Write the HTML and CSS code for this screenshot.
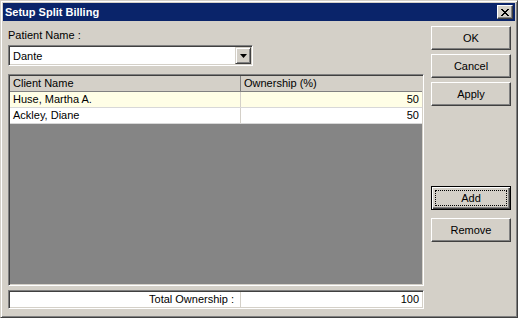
FILE: index.html
```html
<!DOCTYPE html>
<html lang="en">
<head>
    <meta charset="UTF-8">
    <title>Setup Split Billing</title>
    <link rel="stylesheet" href="styles.css">
</head>
<body>
    <div class="window">
        <div class="titlebar">
            <span class="title">Setup Split Billing</span>
            <button class="close-btn">
                <svg width="8" height="7" viewBox="0 0 8 7">
                    <path d="M0 0h2v1h1v1h2v-1h1v-1h2v1h-1v1h-1v1h-1v1h1v1h1v1h1v1h-2v-1h-1v-1h-2v1h-1v1h-2v-1h1v-1h1v-1h1v-1h-1v-1h-1v-1h-1z" fill="#000"/>
                </svg>
            </button>
        </div>

        <div class="dialog-body">
            <div class="main-pane">
                <div class="field-label">Patient Name :</div>
                <div class="combo">
                    <span class="combo-value">Dante</span>
                    <span class="combo-arrow">
                        <svg width="7" height="4" viewBox="0 0 7 4"><path d="M0 0h7l-3.5 4z" fill="#000"/></svg>
                    </span>
                </div>

                <div class="grid">
                    <div class="grid-row grid-head">
                        <div class="cell col-name">Client Name</div>
                        <div class="cell col-pct">Ownership (%)</div>
                    </div>
                    <div class="grid-row row-current">
                        <div class="cell col-name">Huse, Martha A.</div>
                        <div class="cell col-pct num">50</div>
                    </div>
                    <div class="grid-row">
                        <div class="cell col-name">Ackley, Diane</div>
                        <div class="cell col-pct num">50</div>
                    </div>
                </div>

                <div class="total-row">
                    <div class="cell col-name total-label">Total Ownership :</div>
                    <div class="cell col-pct num">100</div>
                </div>
            </div>

            <div class="button-pane">
                <button class="btn">OK</button>
                <button class="btn">Cancel</button>
                <button class="btn">Apply</button>
                <button class="btn btn-focus btn-add"><span class="focus-ring">Add</span></button>
                <button class="btn btn-remove">Remove</button>
            </div>
        </div>
    </div>
</body>
</html>
```

FILE: styles.css
```css
body {
    margin: 0;
    background: #d4d0c8;
    font-family: "Liberation Sans", Arial, sans-serif;
    font-size: 11px;
    color: #000;
}

.window {
    width: 518px;
    height: 318px;
    box-sizing: border-box;
    border: 1px solid;
    border-color: #d4d0c8 #404040 #404040 #d4d0c8;
    box-shadow: inset 1px 1px #fff, inset -1px -1px #808080;
    padding: 2px;
    background: #d4d0c8;
}

.titlebar {
    height: 18px;
    background: #0a246a;
    color: #fff;
    display: flex;
    align-items: center;
    justify-content: space-between;
    padding-left: 2px;
}

.title {
    font-weight: bold;
    font-size: 11px;
}

.close-btn {
    width: 16px;
    height: 14px;
    margin-right: 2px;
    padding: 0;
    box-sizing: border-box;
    background: #d4d0c8;
    border: 1px solid;
    border-color: #fff #404040 #404040 #fff;
    box-shadow: inset -1px -1px #808080;
    display: flex;
    align-items: center;
    justify-content: center;
}

.dialog-body {
    display: flex;
    gap: 7px;
    padding: 0 2px 0 5px;
}

.main-pane {
    width: 416px;
    padding-top: 8px;
}

.field-label {
    line-height: 13px;
    height: 13px;
}

.combo {
    margin-top: 3px;
    width: 245px;
    height: 21px;
    box-sizing: border-box;
    border: 1px solid;
    border-color: #808080 #fff #fff #808080;
    box-shadow: inset 1px 1px #404040, inset -1px -1px #d4d0c8;
    padding: 1px;
    background: #fff;
    display: flex;
    align-items: center;
}

.combo-value {
    flex: 1;
    padding-left: 3px;
}

.combo-arrow {
    width: 16px;
    height: 17px;
    box-sizing: border-box;
    background: #d4d0c8;
    border: 1px solid;
    border-color: #d4d0c8 #404040 #404040 #d4d0c8;
    box-shadow: inset 1px 1px #fff, inset -1px -1px #808080;
    display: flex;
    align-items: center;
    justify-content: center;
}

.grid {
    margin-top: 8px;
    width: 416px;
    height: 212px;
    box-sizing: border-box;
    border: 1px solid;
    border-color: #808080 #fff #fff #808080;
    box-shadow: inset 1px 1px #404040, inset -1px -1px #d4d0c8;
    padding: 1px;
    background: #858585;
}

.grid-row {
    display: flex;
    height: 16px;
    box-sizing: border-box;
    background: #fff;
    border-bottom: 1px solid #d8d8d8;
}

.grid-row.row-current {
    background: #fffee6;
}

.grid-head {
    background: #d4d0c8;
    border-bottom: 1px solid #808080;
}

.cell {
    line-height: 15px;
    padding: 0 3px;
    white-space: nowrap;
    box-sizing: border-box;
}

.col-name {
    width: 231px;
    border-right: 1px solid #d4d0c8;
}

.grid-head .col-name {
    border-right-color: #808080;
}

.col-pct {
    flex: 1;
}

.num {
    text-align: right;
}

.total-row {
    margin-top: 4px;
    width: 416px;
    height: 19px;
    box-sizing: border-box;
    border: 1px solid;
    border-color: #808080 #fff #fff #808080;
    box-shadow: inset 1px 1px #404040, inset -1px -1px #d4d0c8;
    padding: 1px;
    background: #fff;
    display: flex;
}

.total-row .cell {
    line-height: 15px;
}

.total-label {
    text-align: right;
    padding-right: 6px;
}

.button-pane {
    width: 80px;
    padding-top: 5px;
    display: flex;
    flex-direction: column;
    gap: 4px;
}

.btn {
    width: 80px;
    height: 24px;
    box-sizing: border-box;
    padding: 0;
    background: #d4d0c8;
    border: 1px solid;
    border-color: #fff #404040 #404040 #fff;
    box-shadow: inset -1px -1px #808080;
    font-family: "Liberation Sans", Arial, sans-serif;
    font-size: 11px;
    color: #000;
}

.btn-focus {
    border: 1px solid #000;
    box-shadow: inset 1px 1px #fff, inset -1px -1px #404040, inset -2px -2px #808080;
    padding: 3px;
    display: flex;
}

.focus-ring {
    flex: 1;
    border: 1px dotted #000;
    display: flex;
    align-items: center;
    justify-content: center;
}

.btn-add {
    margin-top: 76px;
}

.btn-remove {
    margin-top: 4px;
}
```
